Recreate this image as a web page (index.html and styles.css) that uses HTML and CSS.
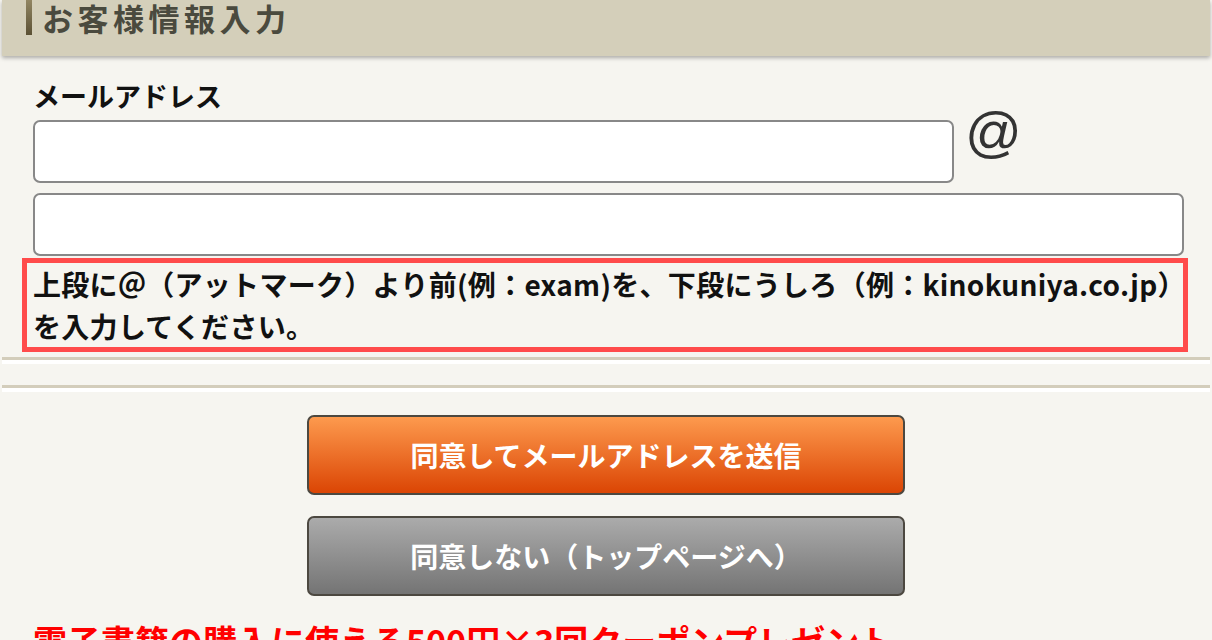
FILE: index.html
```html
<!DOCTYPE html>
<html lang="ja">
<head>
  <meta charset="UTF-8">
  <title>お客様情報入力</title>
  <link rel="stylesheet" href="styles.css">
</head>
<body>

  <div class="page">
    <!-- section title -->
    <div class="section-head">
      <h2>お客様情報入力</h2>
    </div>

    <!-- mail address form -->
    <form class="mail-form" id="mail-form">
      <label class="field-label">メールアドレス</label>
      <div class="mail-row">
        <input type="text" name="mail_local" class="mail-input mail-local">
        <span class="at-mark">@</span>
      </div>
      <input type="text" name="mail_domain" class="mail-input mail-domain">
      <p class="note">上段に＠（アットマーク）より前(例：exam)を、下段にうしろ（例：kinokuniya.co.jp）<br>を入力してください。</p>
    </form>

    <div class="rule"></div>
    <div class="rule second"></div>

    <!-- buttons -->
    <div class="actions">
      <button type="submit" form="mail-form" class="btn btn-send">同意してメールアドレスを送信</button>
      <button type="button" class="btn btn-cancel">同意しない（トップページへ）</button>
    </div>

    <p class="campaign">電子書籍の購入に使える500円×3回クーポンプレゼント</p>
  </div>

</body>
</html>
```

FILE: styles.css
```css
body {
  margin: 0;
  background-color: #f6f5f0;
  font-family: "Noto Sans CJK JP", "Noto Sans", sans-serif;
  color: #111;
}
.page {
  margin: 0 2px;
}
.section-head {
  background-color: #d4cfba;
  box-shadow: 0 2px 4px rgba(0, 0, 0, 0.3);
  height: 56px;
}
.section-head h2 {
  margin: 0;
  padding-left: 24px;
  display: flex;
  align-items: flex-start;
  font-size: 31px;
  line-height: 36px;
  letter-spacing: 4.5px;
  font-weight: bold;
  color: #4a4a3e;
}
.section-head h2::before {
  content: "";
  display: block;
  width: 6px;
  height: 35px;
  margin-right: 10px;
  background: linear-gradient(#918562, #5b5134);
}
.mail-form {
  padding: 22px 27px 0 31px;
  display: flex;
  flex-direction: column;
}
.field-label {
  font-size: 27px;
  font-weight: bold;
  line-height: 36px;
  margin-bottom: 6px;
}
.mail-row {
  display: flex;
  align-items: flex-start;
}
.mail-input {
  box-sizing: border-box;
  height: 63px;
  border: 2px solid #888;
  border-radius: 7px;
  background: #fff;
  font-size: 24px;
  padding: 0 10px;
}
.mail-local {
  width: 921px;
}
.at-mark {
  font-family: "Liberation Sans", Arial, sans-serif;
  font-size: 56px;
  line-height: 56px;
  color: #333;
  margin-left: 11px;
  margin-top: -16px;
}
.mail-domain {
  width: 1151px;
  margin-top: 10px;
}
.note {
  margin: 2px 0 0 -11px;
  width: 1166px;
  box-sizing: border-box;
  border: 5px solid #ff4b4b;
  padding: 0 6px;
  font-size: 28px;
  font-weight: bold;
  line-height: 42px;
  letter-spacing: 0.3px;
  color: #111;
  white-space: nowrap;
}
.rule {
  margin-top: 5px;
  height: 3px;
  background-color: #d3cdbb;
  border-bottom: 4px solid #fff;
}
.rule.second {
  margin-top: 21px;
}
.actions {
  display: flex;
  flex-direction: column;
  align-items: center;
  gap: 21px;
  padding-top: 23px;
}
.btn {
  width: 598px;
  height: 80px;
  border: 2px solid #4c4840;
  border-radius: 7px;
  font-family: "Noto Sans CJK JP", sans-serif;
  font-size: 28px;
  font-weight: bold;
  color: #fff;
  cursor: pointer;
}
.btn-send {
  background: linear-gradient(#fd9a4e, #db4504);
}
.btn-cancel {
  background: linear-gradient(#ababab, #747474);
}
.campaign {
  margin: 25px 0 0 31px;
  font-size: 34px;
  font-weight: bold;
  color: #ff0000;
  line-height: 40px;
  white-space: nowrap;
}
```
